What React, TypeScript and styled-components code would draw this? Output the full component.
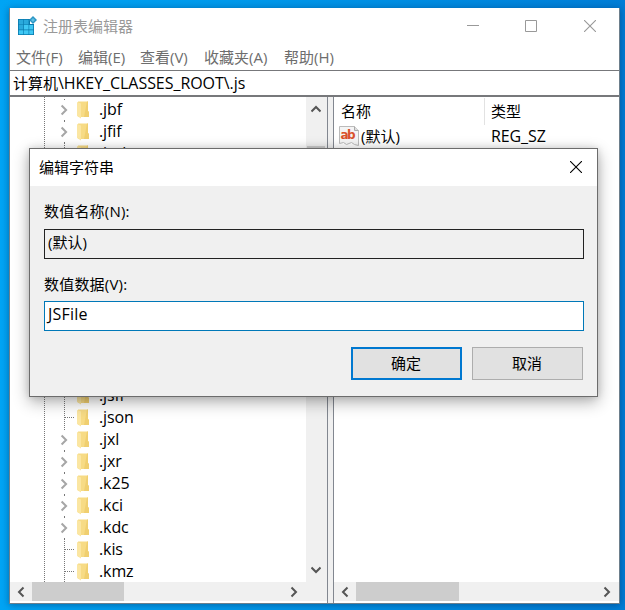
import React from 'react';
import styled, { createGlobalStyle } from 'styled-components';

const Global = createGlobalStyle`
  * { box-sizing: border-box; }
  html, body, #root { margin: 0; height: 100%; overflow: hidden; }
  body { font: 15px/20px "Open Sans", "Noto Sans CJK SC", sans-serif; color: #000; }
  svg { display: block; flex: none; }
`;

const Desktop = styled.div`
  position: relative;
  width: 625px;
  height: 610px;
  padding: 8px 5px 6px 9px;
  background: linear-gradient(90deg, #00a4f4 0, #0098ea 40%, #007dd6 100%);
`;
const Window = styled.div`
  width: 611px;
  height: 596px;
  display: flex;
  flex-direction: column;
  background: #fff;
  border: solid #6d7f8c;
  border-width: 0 1px 1px;
  box-shadow: 0 1px 7px rgba(0, 20, 60, 0.4);
`;
const TitleBar = styled.div`
  height: 36px;
  display: flex;
  align-items: center;
  padding-left: 7px;
  color: #999;
`;
const TitleText = styled.span`
  flex: 1;
  margin-left: 6px;
`;
const WindowControls = styled.div`
  display: grid;
  grid-template-columns: 58px 59px 12px;
  padding-right: 23px;
`;
const MenuBar = styled.div`
  height: 26px;
  display: flex;
  gap: 14px;
  padding: 3px 0 0 6px;
  color: #6d6d6d;
`;
const MenuItem = styled.span<{ $w: number }>`
  width: ${(p) => p.$w}px;
  white-space: nowrap;
`;
const Address = styled.div`
  height: 27px;
  padding: 2px 0 0 3px;
  border: solid #77787b;
  border-width: 1px 0 2px;
`;
const Latin = styled.span<{ $spacing?: number }>`
  font-size: 16px;
  line-height: 20px;
  letter-spacing: ${(p) => p.$spacing ?? -0.1}px;
  white-space: pre;
`;
const Panes = styled.div`
  flex: 1;
  min-height: 0;
  display: flex;
  background: #f0f0f0;
`;
const Pane = styled.div<{ $w: number; $left?: boolean }>`
  width: ${(p) => p.$w}px;
  display: flex;
  flex-direction: column;
  background: #fff;
  border: solid #828790;
  border-width: ${(p) => (p.$left ? '0 0 0 1px' : '0 1px 0 0')};
  margin-left: ${(p) => (p.$left ? 5 : 0)}px;
`;
const TreeArea = styled.div`
  height: 485px;
  display: flex;
`;
const Tree = styled.div`
  flex: 1;
  overflow: hidden;
  padding-top: 2px;
  background: repeating-linear-gradient(#777 0 1px, #fff 1px 2px) 34px 0 / 1px 100% no-repeat;
`;
const TreeRow = styled.div`
  height: 22px;
  display: flex;
  align-items: center;
  padding-left: 47px;
`;
const TreeGap = styled.div`
  height: 220px;
`;
const TreeLabel = styled(Latin)`
  margin: -2px 0 0 9px;
`;
const VScroll = styled.div`
  width: 21px;
  padding: 6px 2px 6px 0;
  display: flex;
  flex-direction: column;
  align-items: center;
  justify-content: space-between;
  background: #f0f0f0;
`;
const VThumb = styled.div`
  width: 18px;
  height: 200px;
  background: #cdcdcd;
  margin: 31px 0 auto;
`;
const HScroll = styled.div<{ $thumb: number; $corner?: number }>`
  height: 19px;
  display: grid;
  grid-template-columns: 22px ${(p) => p.$thumb}px 1fr 22px;
  justify-items: center;
  align-items: center;
  padding-right: ${(p) => p.$corner ?? 1}px;
  background: #f0f0f0;
`;
const HThumb = styled.div`
  grid-column: 2;
  width: 100%;
  height: 100%;
  background: #cdcdcd;
`;
const ListArea = styled.div`
  height: 485px;
`;
const ListHeader = styled.div`
  height: 27px;
  display: grid;
  grid-template-columns: 150px 1fr;
  line-height: 27px;
  padding-top: 1px;
`;
const HeaderCell = styled.div`
  padding-left: 7px;
  & + & {
    padding-left: 6px;
    border-left: 1px solid #e2e2e2;
  }
`;
const ListRow = styled.div`
  height: 24px;
  display: grid;
  grid-template-columns: 22px 130px 1fr;
  align-items: center;
  padding-left: 5px;
`;

const Dialog = styled.div`
  position: absolute;
  left: 29px;
  top: 148px;
  width: 569px;
  height: 249px;
  background: #f0f0f0;
  border: 1px solid #6c6c6c;
  box-shadow: 0 5px 15px rgba(0, 0, 0, 0.32), 0 0 7px rgba(0, 0, 0, 0.12);
`;
const DialogTitle = styled.div`
  height: 37px;
  display: flex;
  align-items: center;
  justify-content: space-between;
  padding: 0 15px 1px 9px;
  background: #fff;
`;
const Form = styled.div`
  padding: 15px 13px 0 14px;
`;
const FieldLabel = styled.div`
  height: 28px;
  letter-spacing: 0.2px;
`;
const Field = styled.div<{ $active?: boolean }>`
  height: 30px;
  padding: 2px 0 0 3px;
  border: 1px solid ${(p) => (p.$active ? '#0078b8' : '#222')};
  background: ${(p) => (p.$active ? '#fff' : '#f0f0f0')};
  margin: ${(p) => (p.$active ? '-1px 0 16px' : '0 0 15px')};
`;
const Buttons = styled.div`
  display: flex;
  justify-content: flex-end;
  gap: 10px;
  padding-right: 1px;
`;
const Button = styled.button<{ $primary?: boolean }>`
  width: 111px;
  height: 33px;
  padding: 0 1px 2px 0;
  font: inherit;
  color: #000;
  background: #e1e1e1;
  border: ${(p) => (p.$primary ? '2px solid #0078d0' : '1px solid #adadad')};
`;

const Chevron = ({ dir }: { dir: 'up' | 'down' | 'left' | 'right' }) => {
  const turn = { right: 0, down: 90, left: 180, up: 270 }[dir];
  return (
    <svg width="10" height="12" viewBox="0 0 10 12">
      <path d="M2.5 1.5 7 6 2.5 10.5" transform={`rotate(${turn} 5 6)`} fill="none" stroke="#555" strokeWidth="2" />
    </svg>
  );
};
const Folder = () => (
  <svg width="13" height="18" viewBox="0 0 13 18">
    <path d="M1 .5h10V10l1 1v5H1z" fill="#f7db85" />
    <path d="M10 .5h1V10l1 1v5H7z" fill="#f0cf70" />
    <path d="M0 1 4 2.500v15L0 15z" fill="#fbe6a2" />
  </svg>
);
const Branch = ({ leaf }: { leaf?: boolean }) => (
  <svg width="20" height="22" viewBox="0 0 20 22">
    {leaf ? (
      <path d="M7.5 0v22M8 10.5h9" stroke="#777" strokeDasharray="1 1" fill="none" />
    ) : (
      <>
        <path d="M7.5 0v2M7.5 21v1" stroke="#777" strokeDasharray="1 1" />
        <path d="M4.6 6.500 9.1 11 4.6 15.500" fill="none" stroke="#a6a6a6" strokeWidth="2" />
      </>
    )}
  </svg>
);
const RegistryIcon = () => (
  <svg width="20" height="20" viewBox="0 0 20 20">
    <path d="M1 3h12v5h4v11H1z" fill="#0878ac" />
    <path d="M1.800 3.800h4.600v4.600H1.800zM7 3.800h4.600v4.600H7zM1.800 9h4.600v4.600H1.800z" fill="#2aa9dc" />
    <path d="M7 9h4.600v4.600H7zM12.200 9h4v4.600h-4zM1.800 14.200h4.600v4H1.800zM7 14.200h4.600v4H7zM12.200 14.200h4v4h-4z" fill="#3fc8f4" />
    <path d="m16 0 4 4-4 4-4-4z" fill="#2b95c4" />
    <path d="m16 2 2 2-2 2-2-2z" fill="#5fc0e4" />
  </svg>
);
const StringIcon = () => (
  <svg width="20" height="20" viewBox="0 0 20 20">
    <path d="M.5.5h15l4 4v15l-4-1-3-2-5 2-3-2-4 1z" fill="#f4f4f4" stroke="#bbb" />
    <path d="M15.5.5v4h4" fill="#ddd" stroke="#aaa" />
    <text x="1.5" y="13" fontFamily="DejaVu Sans" fontWeight="bold" fontSize="12" textLength="15" fill="#d9532c">ab</text>
  </svg>
);
const Cross = ({ color }: { color: string }) => (
  <svg width="12" height="12" viewBox="0 0 12 12">
    <path d="m0 0 12 12M12 0 0 12" stroke={color} strokeWidth="1.1" />
  </svg>
);

type Key = { name: string; leaf?: boolean };
const upperKeys: Key[] = [{ name: '.jbf' }, { name: '.jfif' }, { name: '.jod', leaf: true }];
const lowerKeys: Key[] = [
  { name: '.jsfl', leaf: true },
  { name: '.json', leaf: true },
  { name: '.jxl' },
  { name: '.jxr' },
  { name: '.k25' },
  { name: '.kci' },
  { name: '.kdc' },
  { name: '.kis', leaf: true },
  { name: '.kmz', leaf: true },
];
const KeyRow = ({ name, leaf }: Key) => (
  <TreeRow>
    <Branch leaf={leaf} />
    <Folder />
    <TreeLabel>{name}</TreeLabel>
  </TreeRow>
);

export default function App() {
  return (
    <>
      <Global />
      <Desktop>
        <Window>
          <TitleBar>
            <RegistryIcon />
            <TitleText>注册表编辑器</TitleText>
            <WindowControls>
              <svg width="12" height="12"><path d="M0 5.5h12" stroke="#999" /></svg>
              <svg width="12" height="12"><path d="M.5.5h11v11H.5z" fill="none" stroke="#999" /></svg>
              <Cross color="#999" />
            </WindowControls>
          </TitleBar>
          <MenuBar>
            <MenuItem $w={48}>文件(F)</MenuItem>
            <MenuItem $w={48}>编辑(E)</MenuItem>
            <MenuItem $w={50}>查看(V)</MenuItem>
            <MenuItem $w={66}>收藏夹(A)</MenuItem>
            <MenuItem $w={53}>帮助(H)</MenuItem>
          </MenuBar>
          <Address>计算机<Latin $spacing={-0.05}>\HKEY_CLASSES_ROOT\.js</Latin></Address>
          <Panes>
            <Pane $w={318}>
              <TreeArea>
                <Tree>
                  {upperKeys.map((k) => <KeyRow key={k.name} {...k} />)}
                  <TreeGap />
                  {lowerKeys.map((k) => <KeyRow key={k.name} {...k} />)}
                </Tree>
                <VScroll><Chevron dir="up" /><VThumb /><Chevron dir="down" /></VScroll>
              </TreeArea>
              <HScroll $thumb={92} $corner={22}><Chevron dir="left" /><HThumb /><span /><Chevron dir="right" /></HScroll>
            </Pane>
            <Pane $w={286} $left>
              <ListArea>
                <ListHeader><HeaderCell>名称</HeaderCell><HeaderCell>类型</HeaderCell></ListHeader>
                <ListRow><StringIcon /><span>(默认)</span><Latin>REG_SZ</Latin></ListRow>
              </ListArea>
              <HScroll $thumb={103}><Chevron dir="left" /><HThumb /><span /><Chevron dir="right" /></HScroll>
            </Pane>
          </Panes>
        </Window>
        <Dialog>
          <DialogTitle><span>编辑字符串</span><Cross color="#000" /></DialogTitle>
          <Form>
            <FieldLabel>数值名称(N):</FieldLabel>
            <Field>(默认)</Field>
            <FieldLabel>数值数据(V):</FieldLabel>
            <Field $active><Latin $spacing={0.2}>JSFile</Latin></Field>
            <Buttons><Button $primary>确定</Button><Button>取消</Button></Buttons>
          </Form>
        </Dialog>
      </Desktop>
    </>
  );
}
